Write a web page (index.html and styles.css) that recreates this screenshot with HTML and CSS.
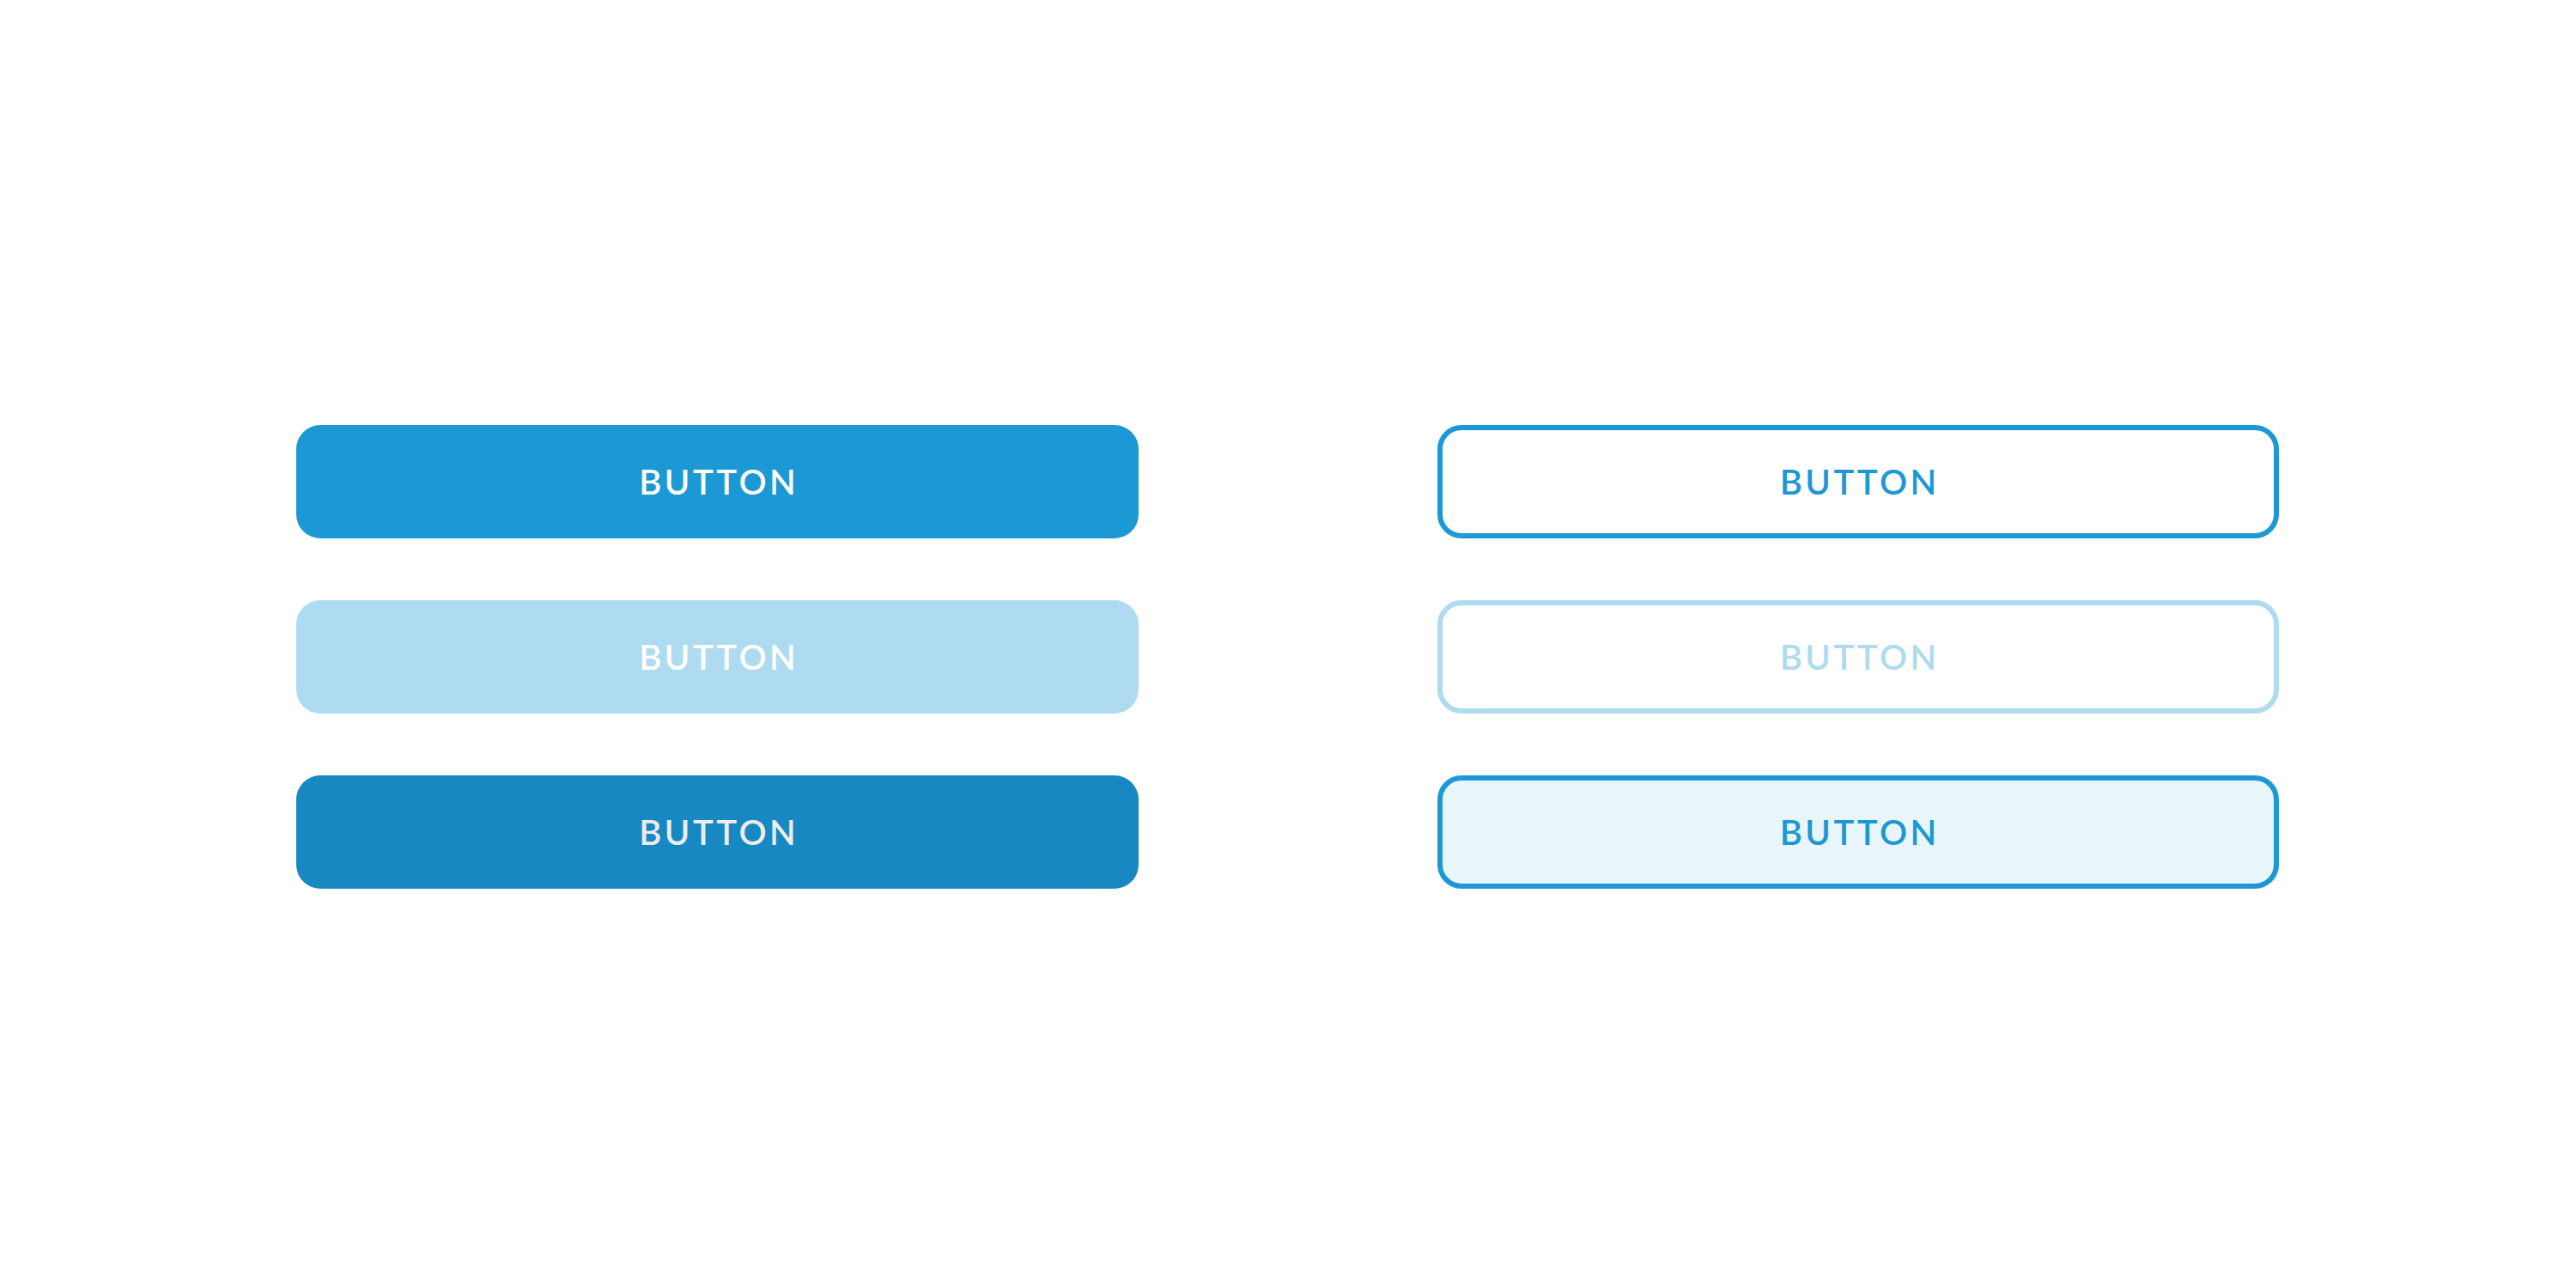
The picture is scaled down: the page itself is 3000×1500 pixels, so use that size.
FILE: index.html
```html
<!DOCTYPE html>
<html>
<head>
<meta charset="utf-8">
<link rel="stylesheet" href="styles.css">
</head>
<body>
<main class="grid">
  <div class="btn solid">BUTTON</div>
  <div class="btn outline">BUTTON</div>
  <div class="btn solid-light">BUTTON</div>
  <div class="btn outline-light">BUTTON</div>
  <div class="btn solid-dark">BUTTON</div>
  <div class="btn outline-active">BUTTON</div>
</main>
</body>
</html>
```
FILE: styles.css
```css
html, body {
  margin: 0;
  padding: 0;
  background: #ffffff;
}
.grid {
  display: grid;
  grid-template-columns: 981px 980px;
  grid-auto-rows: 132px;
  column-gap: 348px;
  row-gap: 72px;
  padding: 495px 0 0 345px;
}
.btn {
  box-sizing: border-box;
  display: flex;
  align-items: center;
  justify-content: center;
  border-radius: 28px;
  font-family: "Lato", "Liberation Sans", sans-serif;
  font-weight: 600;
  font-size: 40px;
  letter-spacing: 3.5px;
  text-indent: 3.5px;
  line-height: 1;
}
.solid { background: #1c98d5; color: #ffffff; }
.solid-light { background: #afdbf0; color: #ffffff; }
.solid-dark { background: #1788c1; color: #ececec; }
.outline { border: 6px solid #1c98d5; color: #1c98d5; background: #ffffff; }
.outline-light { border: 6px solid #afdbf0; color: #afdbf0; background: #ffffff; }
.outline-active { border: 6px solid #1c98d5; color: #1c98d5; background: #e8f5fb; }
```
